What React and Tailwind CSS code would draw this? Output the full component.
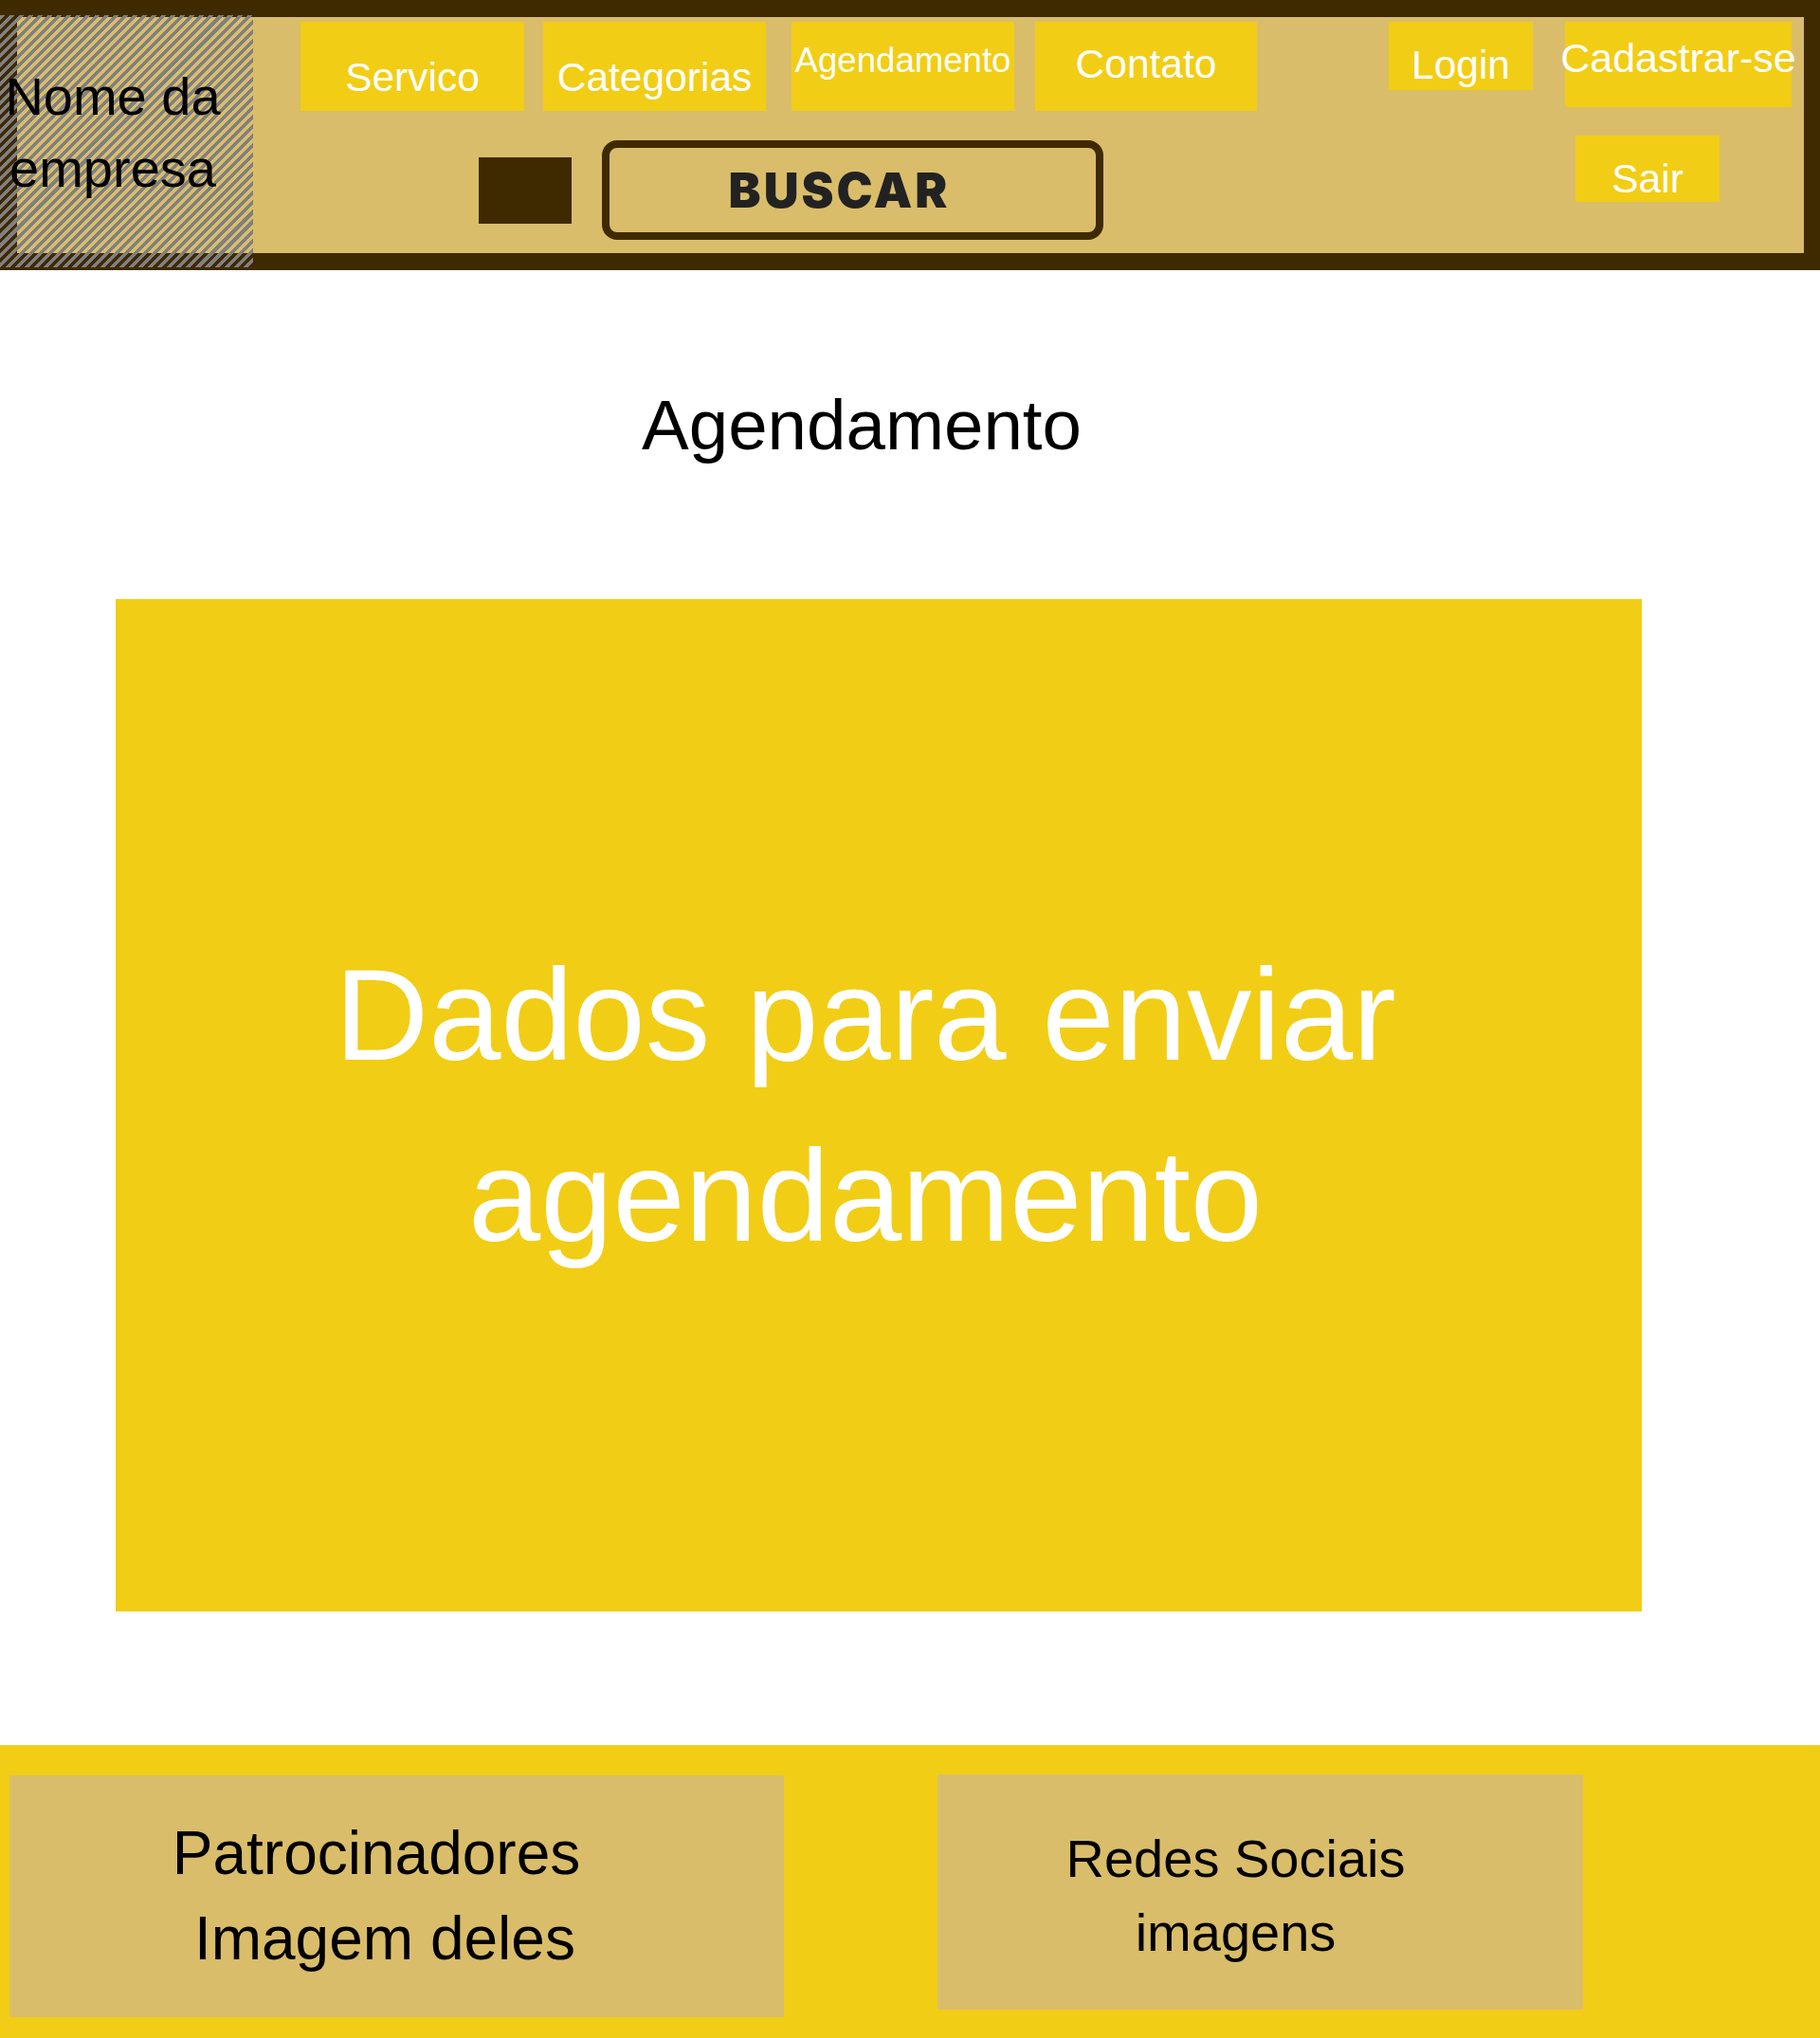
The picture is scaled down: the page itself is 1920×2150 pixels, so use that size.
import React from "react";

const NavBtn = ({ label, cls, textCls }) => (
  <div className={`flex shrink-0 justify-center bg-[#f2cd15] text-white whitespace-nowrap ${cls}`}>
    <span className={`leading-none ${textCls || "text-[42.5px]"}`}>{label}</span>
  </div>
);

export default function App() {
  return (
    <div className="w-[1920px] min-h-[2150px] bg-white font-['Liberation_Sans',Arial,sans-serif]">
      {/* Header */}
      <header className="h-[285px] bg-[#3f2a00] pt-[18px] pb-[18px] pl-[18px] pr-[17px]">
        <div className="flex h-[249px] items-start bg-[#d9bd6a]">
          {/* Logo */}
          <div className="-ml-[18px] -mt-[2px] h-[266px] w-[267px] shrink-0 bg-[repeating-linear-gradient(135deg,#808080_0px,#808080_3.6px,transparent_3.6px,transparent_7.1px)] pt-[48px] pr-[29px]">
            <div className="text-center text-[56px] leading-[76px] text-black whitespace-nowrap">
              <div>Nome da</div>
              <div>empresa</div>
            </div>
          </div>

          {/* Middle */}
          <div className="ml-[50px] mt-[5px] flex flex-col">
            <div className="flex items-start">
              <NavBtn label="Servico" cls="w-[236px] h-[94px] pt-[38px]" />
              <NavBtn label="Categorias" cls="ml-[20px] w-[235px] h-[94px] pt-[38px]" />
              <NavBtn label="Agendamento" cls="ml-[27px] w-[235px] h-[94px] pt-[23px]" textCls="text-[36.6px]" />
              <NavBtn label="Contato" cls="ml-[22px] w-[234px] h-[94px] pt-[24px]" />
            </div>
            <div className="mt-[31px] flex items-start">
              <div className="ml-[188px] mt-[18px] h-[70px] w-[98px] bg-[#3f2a00]" />
              <div className="ml-[32px] flex h-[105px] w-[529px] items-center justify-center rounded-[16px] border-[8px] border-[#3f2a00] pr-[28px]">
                <span className="font-['Inter',sans-serif] text-[51px] font-black leading-none tracking-[3px] text-[#222222]">
                  BUSCAR
                </span>
              </div>
            </div>
          </div>

          {/* Right */}
          <div className="ml-[139px] mt-[5px] flex flex-col">
            <div className="flex items-start">
              <NavBtn label="Login" cls="w-[152px] h-[72px] pt-[25px]" />
              <NavBtn label="Cadastrar-se" cls="ml-[34px] w-[239px] h-[90px] pt-[17px]" textCls="text-[43px]" />
            </div>
            <NavBtn label="Sair" cls="ml-[197px] mt-[30px] w-[152px] h-[70px] pt-[25px]" />
          </div>
        </div>
      </header>

      {/* Title */}
      <div className="mt-[127px] flex justify-center pr-[102px]">
        <h1 className="text-[74.5px] leading-none text-black">Agendamento</h1>
      </div>

      {/* Main yellow box */}
      <div className="ml-[122px] mt-[145px] flex h-[1068px] w-[1610px] items-center justify-center bg-[#f2cd15] pr-[28px]">
        <div className="text-center text-[137px] leading-[191px] text-white">
          <div>Dados para enviar</div>
          <div>agendamento</div>
        </div>
      </div>

      {/* Footer */}
      <footer className="mt-[141px] flex h-[310px] items-start bg-[#f2cd15]">
        <div className="ml-[10px] mt-[32px] flex h-[255px] w-[817px] items-center justify-center bg-[#d9bd6a] pr-[43px]">
          <div className="text-center text-[64px] leading-[90px] text-black whitespace-pre">
            <div>Patrocinadores</div>
            <div>{"\u00a0Imagem deles"}</div>
          </div>
        </div>
        <div className="ml-[162px] mt-[31px] flex h-[248px] w-[681px] items-center justify-center bg-[#d9bd6a] pr-[52px] pt-[8px]">
          <div className="text-center text-[56px] leading-[78px] text-black">
            <div>Redes Sociais</div>
            <div>imagens</div>
          </div>
        </div>
      </footer>
    </div>
  );
}
